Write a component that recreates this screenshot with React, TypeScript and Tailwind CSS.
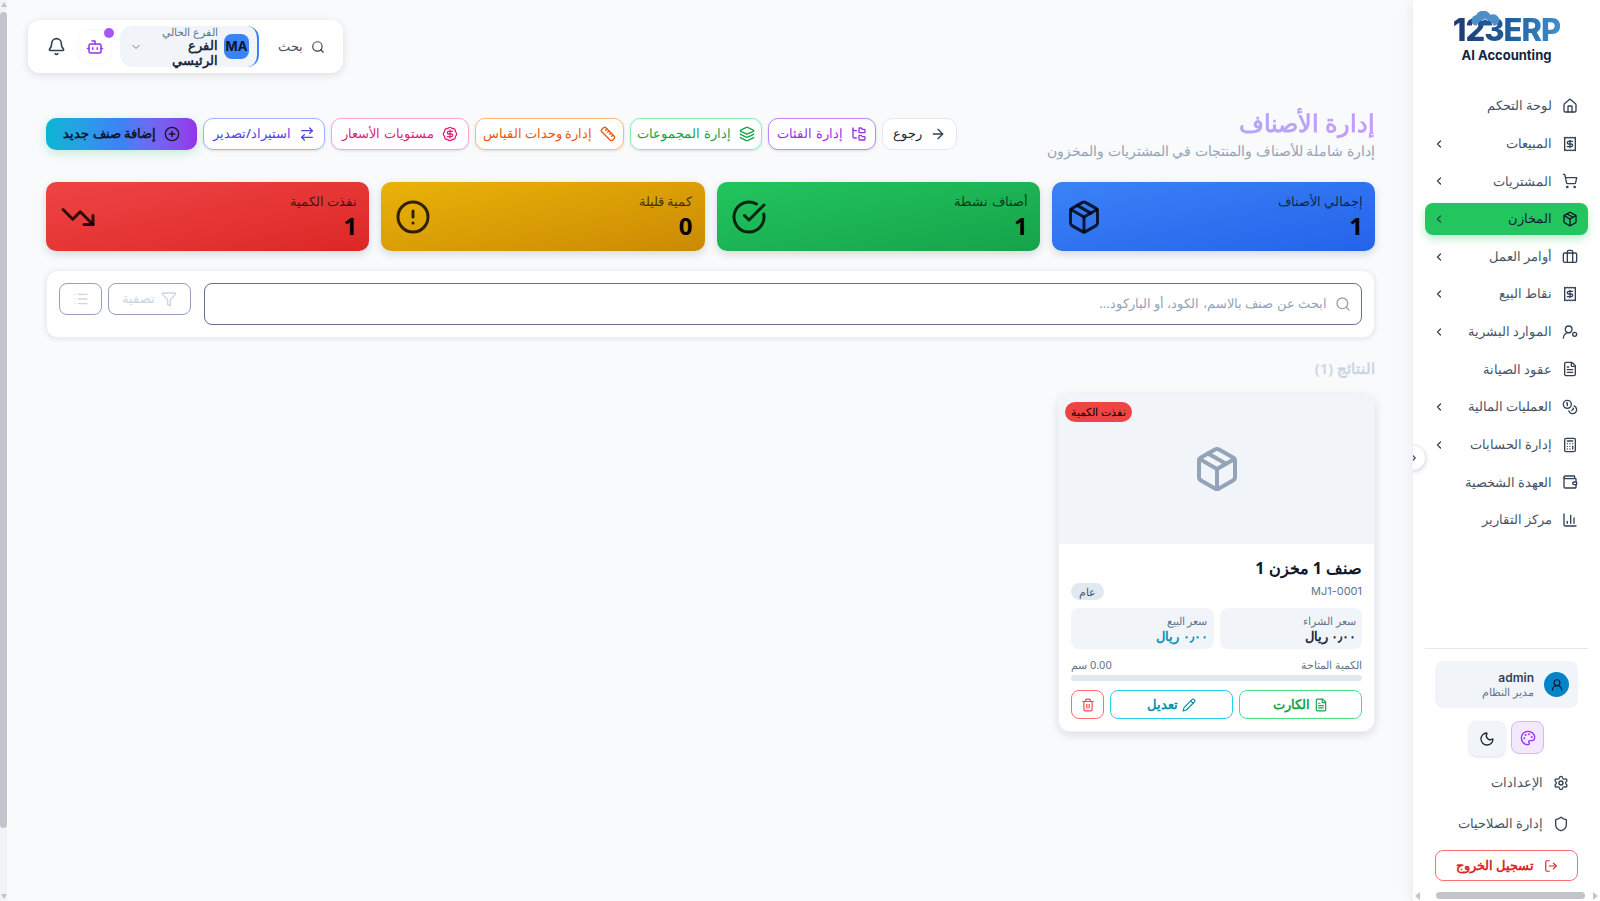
import {
  ArrowRight,
  ArrowRightLeft,
  BadgeDollarSign,
  Bell,
  Bot,
  Briefcase,
  Calculator,
  ChartColumn,
  ChevronDown,
  ChevronLeft,
  CircleAlert,
  CircleCheckBig,
  CirclePlus,
  Coins,
  FileText,
  FolderTree,
  Funnel,
  House,
  Layers,
  List,
  LogOut,
  Moon,
  Package,
  Palette,
  Pencil,
  Receipt,
  Ruler,
  Search,
  Settings,
  Shield,
  ShoppingCart,
  Trash2,
  TrendingDown,
  UserRound,
  Wallet,
} from "lucide-react";
import type { ComponentType, SVGProps } from "react";

type Icon = ComponentType<SVGProps<SVGSVGElement> & { size?: number }>;

// person with a small circle next to it, no matching lucide icon
function UserDot(props: SVGProps<SVGSVGElement>) {
  return (
    <svg viewBox="0 0 24 24" fill="none" stroke="currentColor" strokeWidth={2} strokeLinecap="round" {...props}>
      <circle cx="10" cy="8" r="5" />
      <path d="M2 21a8 8 0 0 1 10-7.7" />
      <circle cx="19" cy="15.5" r="3" />
    </svg>
  );
}

const NAV: { label: string; icon: Icon; sub?: boolean; active?: boolean }[] = [
  { label: "لوحة التحكم", icon: House },
  { label: "المبيعات", icon: Receipt, sub: true },
  { label: "المشتريات", icon: ShoppingCart, sub: true },
  { label: "المخازن", icon: Package, sub: true, active: true },
  { label: "أوامر العمل", icon: Briefcase, sub: true },
  { label: "نقاط البيع", icon: Receipt, sub: true },
  { label: "الموارد البشرية", icon: UserDot, sub: true },
  { label: "عقود الصيانة", icon: FileText },
  { label: "العمليات المالية", icon: Coins, sub: true },
  { label: "إدارة الحسابات", icon: Calculator, sub: true },
  { label: "العهدة الشخصية", icon: Wallet },
  { label: "مركز التقارير", icon: ChartColumn },
];

const STATS: { label: string; value: string; icon: Icon; bg: string }[] = [
  { label: "إجمالي الأصناف", value: "1", icon: Package, bg: "bg-gradient-to-br from-[#3b82f6] to-[#2563eb]" },
  { label: "أصناف نشطة", value: "1", icon: CircleCheckBig, bg: "bg-gradient-to-br from-[#22c55e] to-[#16a34a]" },
  { label: "كمية قليلة", value: "0", icon: CircleAlert, bg: "bg-gradient-to-br from-[#eab308] to-[#ca8a04]" },
  { label: "نفذت الكمية", value: "1", icon: TrendingDown, bg: "bg-gradient-to-br from-[#ef4444] to-[#dc2626]" },
];

const ACTIONS: { label: string; icon: Icon; cls: string }[] = [
  { label: "إدارة الفئات", icon: FolderTree, cls: "w-[108px] border-[#c084fc] text-[#9333ea]" },
  { label: "إدارة المجموعات", icon: Layers, cls: "w-[132px] border-[#86efac] text-[#16a34a]" },
  { label: "إدارة وحدات القياس", icon: Ruler, cls: "w-[149px] border-[#fdba74] text-[#ea580c]" },
  { label: "مستويات الأسعار", icon: BadgeDollarSign, cls: "w-[138px] border-[#f9a8d4] text-[#db2777]" },
  { label: "استيراد/تصدير", icon: ArrowRightLeft, cls: "w-[122px] border-[#a5b4fc] text-[#4f46e5]" },
];

function Logo() {
  return (
    <div className="relative flex h-[90px] flex-col items-center pt-[12px]" dir="ltr">
      <svg viewBox="0 0 40 24" className="absolute left-[54px] top-[11px] h-[22px] w-[36px]">
        <path d="M9 16a6 6 0 0 1 1-11.5A9 9 0 0 1 26 4a6.5 6.5 0 0 1 6 12h-3v-2l-9-6-9 6v2z" fill="#4f8fc9" />
        <path d="M20 9l8 5v2H12v-2z" fill="#1e5a96" />
      </svg>
      <div className="bg-gradient-to-r from-[#1e3a6e] via-[#1d5c9a] to-[#3f8fd0] bg-clip-text font-['Inter',sans-serif] text-[31px] leading-[36px] font-extrabold tracking-[-1px] text-transparent">
        123ERP
      </div>
      <div className="font-['Inter',sans-serif] text-[13px] leading-[14px] font-bold text-[#15233f]">AI Accounting</div>
    </div>
  );
}

function Sidebar() {
  return (
    <aside className="relative flex h-[901px] w-[187px] shrink-0 flex-col overflow-hidden bg-white shadow-[0_0_16px_rgba(15,23,42,0.08)]">
      <Logo />
      <nav className="flex flex-col gap-[5.64px] px-3">
        {NAV.map((item) => (
          <div
            key={item.label}
            className={`flex h-8 items-center gap-2.5 rounded-lg pr-2.5 pl-2 text-[13px] ${
              item.active
                ? "bg-[#22c55e] text-[#14213a] shadow-[0_4px_10px_rgba(34,197,94,0.3)]"
                : "text-[#475569]"
            }`}
          >
            <item.icon className={`h-4 w-4 shrink-0 ${item.active ? "text-[#0f172a]" : "text-[#334155]"}`} />
            <span className="flex-1">{item.label}</span>
            {item.sub && <ChevronLeft className="h-3 w-3 text-[#334155]" strokeWidth={2.5} />}
          </div>
        ))}
      </nav>

      <div className="absolute top-[446px] -left-3 flex h-6 w-6 items-center justify-end rounded-full bg-white shadow-[0_1px_5px_rgba(15,23,42,0.25)]">
        <ChevronLeft className="ml-[8px] h-2.5 w-2.5 rotate-180 text-[#475569]" strokeWidth={3} />
      </div>

      <div className="mt-auto px-3">
        <div className="border-t border-[#e2e8f0] px-2.5 pt-[12px]">
          <div className="flex h-[47px] items-center gap-2.5 rounded-lg bg-[#f1f5f9] pr-[9px]">
            <div className="flex h-[25px] w-[25px] items-center justify-center rounded-full bg-[#0284c7]">
              <UserRound className="h-3.5 w-3.5 text-[#0f172a]" />
            </div>
            <div className="flex flex-col">
              <span className="font-['Inter',sans-serif] text-[12px] leading-[15px] font-semibold text-[#334155]">admin</span>
              <span className="text-[11px] leading-[14px] text-[#64748b]">مدير النظام</span>
            </div>
          </div>
          <div className="mt-[13px] flex items-start justify-center gap-1.5">
            <div className="flex h-[33px] w-[33px] items-center justify-center rounded-lg border border-[#d8b4fe] bg-[#f3e8ff]">
              <Palette className="h-4 w-4 text-[#9333ea]" />
            </div>
            <div className="flex h-[35px] w-9 items-center justify-center rounded-lg bg-[#f1f5f9] shadow-[0_1px_3px_rgba(15,23,42,0.15)]">
              <Moon className="h-4 w-4 text-[#1e293b]" />
            </div>
          </div>
        </div>
        <div className="mt-[6px] flex flex-col">
          {[
            { label: "الإعدادات", icon: Settings },
            { label: "إدارة الصلاحيات", icon: Shield },
          ].map((l) => (
            <div key={l.label} className="flex h-[41px] items-center gap-2.5 pr-[19px] text-[13px] text-[#475569]">
              <l.icon className="h-4 w-4 text-[#334155]" />
              {l.label}
            </div>
          ))}
        </div>
        <div className="mx-2.5 mt-[6px] flex h-[31px] items-center gap-2.5 rounded-lg border border-[#f87171] pr-[19px] text-[13px] font-bold text-[#dc2626]">
          <LogOut className="h-3.5 w-3.5" />
          تسجيل الخروج
        </div>
      </div>

      {/* sidebar horizontal scrollbar */}
      <div className="mt-[11px] mb-[2px] flex h-[7px] items-center gap-[16px] px-[2px]" dir="ltr">
        <span className="h-0 w-0 border-y-[4px] border-r-[5px] border-y-transparent border-r-[#c1c5cb]" />
        <span className="h-[7px] flex-1 rounded-full bg-[#c1c5cb]" />
        <span className="-ml-[8px] h-0 w-0 border-y-[4px] border-l-[5px] border-y-transparent border-l-[#c1c5cb]" />
      </div>
    </aside>
  );
}

function TopBar() {
  return (
    <div className="flex justify-end pt-5 pl-[21px]">
      <div className="flex h-[53px] w-[315px] items-center rounded-xl bg-white pr-[18px] pl-[19px] shadow-[0_2px_8px_rgba(15,23,42,0.12)]">
        <div className="flex items-center gap-2 text-[13px] text-[#475569]">
          <Search className="h-3.5 w-3.5 text-[#334155]" />
          بحث
        </div>
        <div className="mr-[19px] flex h-[41px] w-[139px] items-center gap-[6px] rounded-xl border-r-2 border-[#3b82f6] bg-[#f1f5f9] pr-[8px] pl-[10px]">
          <div className="flex h-[25px] w-[25px] shrink-0 items-center justify-center rounded-lg bg-[#3b82f6] font-['Inter',sans-serif] text-[13px] font-bold text-[#0f172a]">
            MA
          </div>
          <div className="flex flex-1 flex-col">
            <span className="text-[11px] leading-[13px] text-[#64748b]">الفرع الحالي</span>
            <span className="text-[13px] leading-[15px] font-semibold text-[#1e293b]">الفرع الرئيسي</span>
          </div>
          <ChevronDown className="h-3 w-3 text-[#64748b]" />
        </div>
        <div className="relative mr-[9px] flex h-8 w-8 items-center justify-center rounded-lg bg-white shadow-[0_0_3px_rgba(15,23,42,0.08)]">
          <Bot className="h-[18px] w-[18px] text-[#9333ea]" />
          <span className="absolute -top-[3px] -right-[3px] h-2.5 w-2.5 rounded-full bg-[#a855f7]" />
        </div>
        <Bell className="mr-auto h-[19px] w-[19px] text-[#334155]" />
      </div>
    </div>
  );
}

function PageHeader() {
  return (
    <div className="mt-[30px] flex h-[62px] items-center justify-between">
      <div className="flex flex-col">
        <h1 className="bg-gradient-to-l from-[#c79bf9] to-[#8fb4fb] bg-clip-text text-[24px] leading-[32px] font-bold text-transparent">
          إدارة الأصناف
        </h1>
        <p className="mt-[2px] text-[14px] leading-[20px] text-[#94a3b8]">
          إدارة شاملة للأصناف والمنتجات في المشتريات والمخزون
        </p>
      </div>
      <div className="flex items-center gap-[6px]">
        <button className="flex h-8 w-[75px] items-center justify-center gap-2 rounded-[10px] border border-[#e2e8f0] bg-white text-[13px] text-[#1e293b]">
          <ArrowRight className="h-4 w-4 text-[#334155]" />
          رجوع
        </button>
        {ACTIONS.map((a) => (
          <button
            key={a.label}
            className={`flex h-8 items-center justify-center gap-2 rounded-[10px] border bg-white text-[13px] font-medium shadow-[0_1px_3px_rgba(15,23,42,0.12)] ${a.cls}`}
          >
            <a.icon className="h-4 w-4" />
            {a.label}
          </button>
        ))}
        <button className="flex h-8 w-[151px] items-center justify-center gap-2 rounded-[10px] bg-gradient-to-l from-[#9333ea] via-[#3b82f6] to-[#06b6d4] text-[13px] font-semibold text-[#0f172a] shadow-[0_3px_10px_rgba(34,197,94,0.25)]">
          <CirclePlus className="h-4 w-4" />
          إضافة صنف جديد
        </button>
      </div>
    </div>
  );
}

function Stats() {
  return (
    <div className="mt-[17px] grid grid-cols-4 gap-3">
      {STATS.map((s) => (
        <div
          key={s.label}
          className={`flex h-[69px] items-center justify-between rounded-[10px] pr-3 pl-[14px] shadow-[0_3px_8px_rgba(15,23,42,0.15)] ${s.bg}`}
        >
          <div className="flex flex-col">
            <span className="text-[12.5px] leading-[18px] text-black/70">{s.label}</span>
            <span className="text-[24px] leading-[30px] font-bold text-black">{s.value}</span>
          </div>
          <s.icon className="h-9 w-9 text-black/80" />
        </div>
      ))}
    </div>
  );
}

function SearchBox() {
  return (
    <div className="mt-[19px] flex h-[68px] items-start gap-[6px] rounded-xl border border-[#eef2f7] bg-white p-3 shadow-[0_1px_5px_rgba(15,23,42,0.1)]">
      <div className="ml-[7px] flex h-[42px] flex-1 items-center gap-2 rounded-lg border border-[#64748b] px-2.5 text-[13px] text-[#94a3b8]">
        <Search className="h-4 w-4" />
        ابحث عن صنف بالاسم، الكود، أو الباركود...
      </div>
      <button className="flex h-8 w-[83px] items-center justify-center gap-1.5 rounded-lg border border-[#94a3b8] text-[13px] text-[#cbd5e1]">
        <Funnel className="h-4 w-4" />
        تصفية
      </button>
      <button className="flex h-8 w-[43px] items-center justify-center rounded-lg border border-[#94a3b8] text-[#cbd5e1]">
        <List className="h-4 w-4" />
      </button>
    </div>
  );
}

function ItemCard() {
  return (
    <div className="mt-[14px] w-[317px] overflow-hidden rounded-xl border border-[#eef2f7] bg-white shadow-[0_3px_10px_rgba(15,23,42,0.12)]">
      <div className="relative flex h-[150px] items-center justify-center bg-[#f1f5f9]">
        <Package className="h-12 w-12 text-[#94a3b8]" />
        <span className="absolute top-2 left-1.5 flex h-5 w-[67px] items-center justify-center rounded-full bg-[#ef4444] text-[11px] text-black">
          نفذت الكمية
        </span>
      </div>
      <div className="px-3 pt-[12px] pb-3">
        <h3 className="text-[16px] leading-[24px] font-bold text-[#0f172a]">صنف 1 مخزن 1</h3>
        <div className="mt-[3px] flex h-[17px] items-center justify-between">
          <span className="font-['Inter',sans-serif] text-[11px] text-[#64748b]">MJ1-0001</span>
          <span className="rounded-full bg-[#e2e8f0] px-2 text-[11px] leading-[17px] text-[#475569]">عام</span>
        </div>
        <div className="mt-2 grid grid-cols-2 gap-[6px]">
          <div className="h-[41px] rounded-lg bg-[#f1f5f9] px-1.5 pt-[5px]">
            <div className="text-[11px] leading-[15px] text-[#64748b]">سعر الشراء</div>
            <div className="text-[13px] leading-[16px] font-semibold text-[#1e293b]">٠٫٠٠ ريال</div>
          </div>
          <div className="h-[41px] rounded-lg bg-[#f1f5f9] px-1.5 pt-[5px]">
            <div className="text-[11px] leading-[15px] text-[#64748b]">سعر البيع</div>
            <div className="text-[13px] leading-[16px] font-semibold text-[#0891b2]">٠٫٠٠ ريال</div>
          </div>
        </div>
        <div className="mt-[9px] flex h-[15px] items-center justify-between text-[11px] text-[#64748b]">
          <span>الكمية المتاحة</span>
          <span>0.00 سم</span>
        </div>
        <div className="mt-[2px] h-1.5 rounded-full bg-[#e2e8f0]" />
        <div className="mt-[9px] flex gap-[6px]">
          <button className="flex h-[29px] flex-1 items-center justify-center gap-1 rounded-lg border border-[#4ade80] text-[13px] font-semibold text-[#16a34a]">
            <FileText className="h-3.5 w-3.5" />
            الكارت
          </button>
          <button className="flex h-[29px] flex-1 items-center justify-center gap-1 rounded-lg border border-[#22d3ee] text-[13px] font-semibold text-[#0891b2]">
            <Pencil className="h-3.5 w-3.5" />
            تعديل
          </button>
          <button className="flex h-[29px] w-[33px] items-center justify-center rounded-lg border border-[#f87171] text-[#ef4444]">
            <Trash2 className="h-3.5 w-3.5" />
          </button>
        </div>
      </div>
    </div>
  );
}

export default function App() {
  return (
    <div dir="rtl" lang="ar" className="flex h-[901px] overflow-hidden bg-[#f8fafc] font-['Noto_Sans','Inter',sans-serif]">
      <Sidebar />
      <main className="min-w-0 flex-1">
        <TopBar />
        <div className="pr-[38px] pl-[39px]">
          <PageHeader />
          <Stats />
          <SearchBox />
          <h2 className="mt-[19px] text-[15px] leading-[22px] font-semibold text-[#cbd5e1]">النتائج (1)</h2>
          <ItemCard />
        </div>
      </main>
      {/* page scrollbar, browser puts it on the left in rtl */}
      <div className="flex w-[7px] shrink-0 flex-col items-center bg-[#f1f3f5] py-[2px]">
        <span className="h-0 w-0 border-x-[3.5px] border-b-[5px] border-x-transparent border-b-[#c1c5cb]" />
        <span className="mt-[5px] h-[816px] w-full rounded-full bg-[#c1c5cb]" />
        <span className="mt-auto h-0 w-0 border-x-[3.5px] border-t-[5px] border-x-transparent border-t-[#c1c5cb]" />
      </div>
    </div>
  );
}
